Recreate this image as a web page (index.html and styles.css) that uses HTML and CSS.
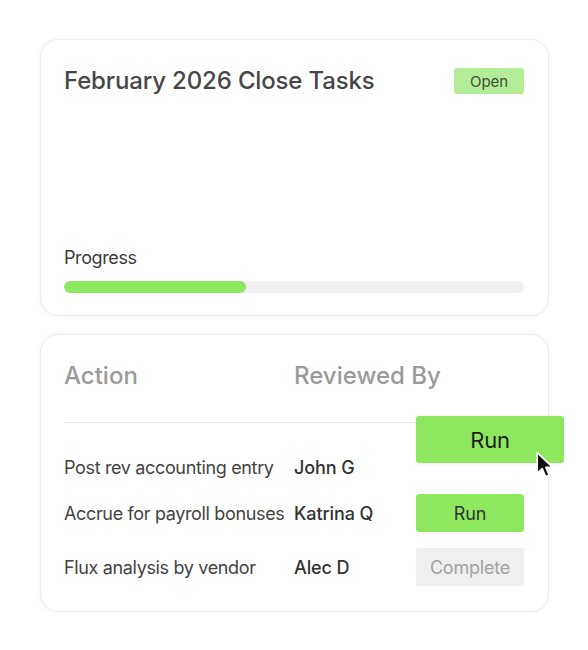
FILE: index.html
```html
<!DOCTYPE html>
<html lang="en">
<head>
<meta charset="utf-8">
<title>February 2026 Close Tasks</title>
<link rel="stylesheet" href="styles.css">
</head>
<body>
<main class="stack">
  <section class="card summary">
    <div class="summary-head">
      <h1 class="title">February 2026 Close Tasks</h1>
      <span class="badge">Open</span>
    </div>
    <div class="progress">
      <div class="progress-label">Progress</div>
      <div class="track"><div class="fill" style="width: 39.5%"></div></div>
    </div>
  </section>

  <section class="card tasks">
    <div class="table-head">
      <span class="th">Action</span>
      <span class="th">Reviewed By</span>
    </div>
    <div class="divider"></div>
    <div class="rows">
      <div class="row row-first">
        <span class="action">Post rev accounting entry</span>
        <span class="name">John G</span>
        <span class="btn-slot"></span>
      </div>
      <div class="row">
        <span class="action">Accrue for payroll bonuses</span>
        <span class="name">Katrina Q</span>
        <button class="btn run">Run</button>
      </div>
      <div class="row row-last">
        <span class="action">Flux analysis by vendor</span>
        <span class="name">Alec D</span>
        <button class="btn complete">Complete</button>
      </div>
    </div>
    <button class="btn run big">Run</button>
    <svg class="cursor" width="21" height="29" viewBox="0 0 20 28" aria-hidden="true">
      <path d="M2 1.5 L2 21.5 L6.8 17 L10 24.8 L13.6 23.3 L10.4 15.8 L17 15.8 Z" fill="#111" stroke="#fff" stroke-width="1.6" stroke-linejoin="round"/>
    </svg>
  </section>
</main>
</body>
</html>
```

FILE: styles.css
```css
* { box-sizing: border-box; }

html, body {
  margin: 0;
  padding: 0;
  background: #ffffff;
}

body {
  font-family: "Inter", "Liberation Sans", sans-serif;
  color: #444;
}

.stack {
  width: 509px;
  margin: 39px 0 0 40px;
  display: flex;
  flex-direction: column;
  gap: 18px;
}

.card {
  background: #fff;
  border: 1px solid #ececec;
  border-radius: 18px;
  box-shadow: 0 0 6px rgba(0, 0, 0, 0.04);
  padding: 0 24px 0 23px;
}

.summary {
  height: 277px;
  display: flex;
  flex-direction: column;
  justify-content: space-between;
  padding-top: 26px;
  padding-bottom: 22px;
}

.summary-head {
  display: flex;
  justify-content: space-between;
  align-items: center;
}

.title {
  margin: 0;
  font-size: 24px;
  line-height: 30px;
  font-weight: 500;
  letter-spacing: -0.15px;
  color: #474747;
}

.badge {
  width: 70px;
  height: 26px;
  display: flex;
  align-items: center;
  justify-content: center;
  background: #b4ed98;
  border-radius: 3px;
  font-size: 15px;
  color: #3f4f3a;
  letter-spacing: -0.1px;
}

.progress-label {
  font-size: 18px;
  line-height: 22px;
  letter-spacing: -0.4px;
  color: #3c3c3c;
  margin-bottom: 12px;
}

.track {
  height: 12px;
  border-radius: 6px;
  background: #f0f0f0;
  overflow: hidden;
}

.fill {
  height: 100%;
  border-radius: 6px;
  background: #8ce85f;
}

.tasks {
  position: relative;
  height: 278px;
  padding-top: 23px;
}

.table-head {
  display: grid;
  grid-template-columns: 230px 1fr;
  height: 34px;
  align-items: center;
}

.th {
  font-size: 24px;
  font-weight: 500;
  letter-spacing: 0;
  color: #9a9a9a;
}

.divider {
  height: 1px;
  background: #e8e8e8;
  margin-top: 30px;
}

.rows {
  display: flex;
  flex-direction: column;
  gap: 8px;
  margin-top: 25px;
}

.row {
  display: grid;
  grid-template-columns: 230px 122px 108px;
  align-items: center;
  height: 38px;
}

.row-last { margin-top: 8px; }

.action {
  font-size: 18px;
  letter-spacing: -0.35px;
  color: #444;
  white-space: nowrap;
}

.name {
  font-size: 18px;
  font-weight: 500;
  letter-spacing: -0.1px;
  color: #333;
}

.btn-slot { height: 38px; }

.btn {
  height: 38px;
  border: 0;
  border-radius: 3px;
  font-family: inherit;
  font-size: 18px;
  letter-spacing: -0.2px;
  padding: 0;
}

.run {
  background: #8de85f;
  color: #333;
}

.complete {
  background: #efefef;
  color: #a2a2a2;
}

.big {
  position: absolute;
  left: 375px;
  top: 81px;
  width: 148px;
  height: 47px;
  font-size: 22px;
  color: #1e1e1e;
  box-shadow: 0 1px 3px rgba(0, 0, 0, 0.06);
}

.cursor {
  position: absolute;
  left: 494px;
  top: 116px;
}
```
